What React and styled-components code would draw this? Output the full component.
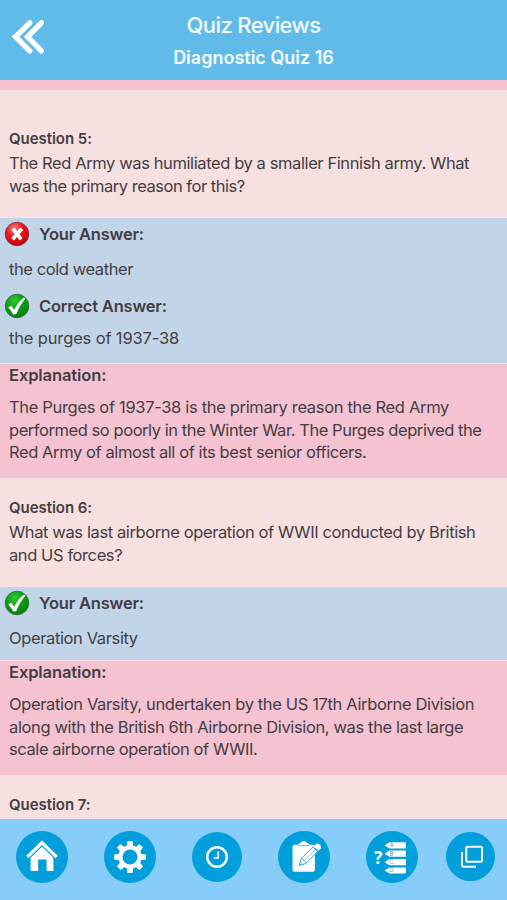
import React from "react";
import styled, { createGlobalStyle } from "styled-components";

const reviews = [
  {
    number: 5,
    first: true,
    question: [
      { text: "The Red Army was humiliated by a smaller Finnish army. What", spacing: -0.4 },
      { text: "was the primary reason for this?", spacing: -0.47 },
    ],
    answers: [
      { label: "Your Answer:", text: "the cold weather", spacing: -0.42, correct: false },
      { label: "Correct Answer:", text: "the purges of 1937-38", spacing: -0.15, correct: true },
    ],
    explanation: [
      { text: "The Purges of 1937-38 is the primary reason the Red Army", spacing: -0.33 },
      { text: "performed so poorly in the Winter War. The Purges deprived the", spacing: -0.44 },
      { text: "Red Army of almost all of its best senior officers.", spacing: -0.41 },
    ],
  },
  {
    number: 6,
    question: [
      { text: "What was last airborne operation of WWII conducted by British", spacing: -0.39 },
      { text: "and US forces?", spacing: -0.41 },
    ],
    answers: [
      { label: "Your Answer:", text: "Operation Varsity", spacing: -0.38, correct: true },
    ],
    explanation: [
      { text: "Operation Varsity, undertaken by the US 17th Airborne Division", spacing: -0.36 },
      { text: "along with the British 6th Airborne Division, was the last large", spacing: -0.37 },
      { text: "scale airborne operation of WWII.", spacing: -0.41 },
    ],
  },
  { number: 7 },
];

const Lines = ({ lines }) => (
  <Text>
    {lines.map(({ text, spacing }) => (
      <Line key={text} $spacing={spacing}>
        {text}
      </Line>
    ))}
  </Text>
);

const StatusIcon = ({ correct }) => {
  const id = correct ? "ball-green" : "ball-red";
  return (
    <svg width="26" height="26" viewBox="0 0 26 26">
      <defs>
        <radialGradient id={id} cx="0.4" cy="0.28" r="0.75">
          <stop offset="0" stopColor={correct ? "#35c63a" : "#ff7d7d"} />
          <stop offset="0.5" stopColor={correct ? "#0aa012" : "#f0131b"} />
          <stop offset="1" stopColor={correct ? "#077a0c" : "#b9000a"} />
        </radialGradient>
      </defs>
      <circle
        cx="13"
        cy="13"
        r="11.8"
        fill={`url(#${id})`}
        stroke={correct ? "#2c6b38" : "#8d2936"}
        strokeWidth="0.8"
      />
      {correct ? (
        <path
          d="M4.2 14.6 7.2 12.8 10.2 16.8C12.6 11.6 15.8 7.6 20 4.4L21.4 5.8C17.4 10.6 14.4 15.4 12.2 21.2L9.2 21.6C7.8 19 6.2 16.6 4.2 14.6Z"
          fill="#fff"
        />
      ) : (
        <path
          d="M8.8 7.6 17.2 18.4M17.8 7.8 8.6 18.2"
          stroke="#fff"
          strokeWidth="3.7"
        />
      )}
    </svg>
  );
};

const BackIcon = () => (
  <svg width="36" height="36" viewBox="0 0 36 36" fill="none">
    <path
      d="M19.8 4.8 5.6 18.8 19.8 32.8M31.3 4.8 17.6 18.8 31.3 32.8"
      stroke="#fff"
      strokeWidth="5.4"
      strokeLinecap="round"
      strokeLinejoin="miter"
    />
  </svg>
);

const HomeIcon = () => (
  <svg width="52" height="52" viewBox="0 0 52 52">
    <path d="M14.6 26.4 26 15.3 37.4 26.4V40H30.6V28.6H22.2V40H14.6Z" fill="#fff" />
    <path
      d="M10.6 27 26 12.3 41.4 27"
      fill="none"
      stroke="#009fdb"
      strokeWidth="4.6"
    />
    <path
      d="M11.3 26 26 11.8 40.7 26"
      fill="none"
      stroke="#fff"
      strokeWidth="3.2"
    />
  </svg>
);

const GearIcon = () => (
  <svg width="52" height="52" viewBox="0 0 52 52">
    <g fill="#fff">
      {[0, 45, 90, 135, 180, 225, 270, 315].map((angle) => (
        <path
          key={angle}
          d="M22.8 16 23.4 10.1H28.6L29.2 16Z"
          transform={`rotate(${angle} 26 26)`}
        />
      ))}
    </g>
    <circle cx="26" cy="26" r="9.6" fill="none" stroke="#fff" strokeWidth="4.2" />
  </svg>
);

const ClockIcon = () => (
  <svg width="52" height="52" viewBox="0 0 52 52" fill="none" stroke="#fff">
    <circle cx="26" cy="26" r="9.8" strokeWidth="2.5" />
    <path d="M27.2 20.4V27H22.6" strokeWidth="1.7" />
  </svg>
);

const ClipboardIcon = () => (
  <svg width="52" height="52" viewBox="0 0 52 52">
    <path
      d="M16.4 13.8H20.3Q20.5 12 22.8 11.8 23.5 9.9 25.8 9.9 28 9.9 28.7 11.8 30.9 12 31.2 13.8H35Q36.9 13.8 36.9 15.7V38.8Q36.9 40.8 35 40.8H16.4Q14.5 40.8 14.5 38.8V15.7Q14.5 13.8 16.4 13.8Z"
      fill="#fff"
    />
    <path d="M20.2 14.7H31.2" stroke="#009fdb" strokeWidth="0.7" />
    <path
      d="M21.4 34.4 23.1 27.7 34.9 16 39.6 20.7 27.9 32.5Z"
      fill="#fff"
      stroke="#2aa5d2"
      strokeWidth="1"
    />
    <path
      d="M25.5 30.1 37.2 18.4M23.1 27.7 25.5 28.4 25.7 30.1 27.5 30.5 27.9 32.5M21.4 34.4 24 31.8"
      fill="none"
      stroke="#2aa5d2"
      strokeWidth="0.6"
    />
    <path
      d="M35.8 15.4 38.2 12.8Q39.7 12.1 41.2 13.3L42.6 14.7Q43.6 16 42.8 17.4L40.4 19.8Z"
      fill="#fff"
    />
  </svg>
);

const OptionsIcon = () => (
  <svg width="52" height="52" viewBox="0 0 52 52">
    <text x="8.2" y="32.8" fill="#fff" fontSize="17" fontWeight="700" fontFamily="Open Sans">
      ?
    </text>
    {["A", "B", "C", "D"].map((letter, i) => (
      <g key={letter} transform={`translate(0 ${i * 8.4})`}>
        <path d="M18.6 14.4 23.4 11.2H39.8V17.4H23.4Z" fill="#fff" />
        <text
          x="25.6"
          y="16.3"
          fill="#2aa5d2"
          fontSize="5.5"
          textAnchor="middle"
          fontFamily="Inter"
        >
          {letter}
        </text>
      </g>
    ))}
  </svg>
);

const CopyIcon = () => (
  <svg width="52" height="52" viewBox="0 0 52 52" fill="none" stroke="#fff">
    <rect x="21.3" y="15.8" width="15.7" height="15" rx="1" strokeWidth="2" />
    <path d="M17 21V34.1Q17 35.8 18.7 35.8H31" strokeWidth="2" />
  </svg>
);

const tabs = [
  { name: "Home", Icon: HomeIcon, size: 52 },
  { name: "Settings", Icon: GearIcon, size: 52 },
  { name: "History", Icon: ClockIcon, size: 50 },
  { name: "Review", Icon: ClipboardIcon, size: 52 },
  { name: "Quiz", Icon: OptionsIcon, size: 52 },
  { name: "Cards", Icon: CopyIcon, size: 49 },
];

const App = () => {
  return (
    <>
      <GlobalStyle />
      <Screen>
        <Header>
          <BackButton aria-label="back">
            <BackIcon />
          </BackButton>
          <h1>Quiz Reviews</h1>
          <h2>Diagnostic Quiz 16</h2>
        </Header>
        <Content>
          <Strip />
          {reviews.map(({ number, first, question, answers, explanation }) => (
            <article key={number}>
              <Question $first={first}>
                <Label $small>Question {number}:</Label>
                {question && <Lines lines={question} />}
              </Question>
              {answers && (
                <Answers $count={answers.length}>
                  {answers.map(({ label, text, spacing, correct }) => (
                    <Answer key={label}>
                      <AnswerTitle>
                        <StatusIcon correct={correct} />
                        <Label>{label}</Label>
                      </AnswerTitle>
                      <Line $spacing={spacing}>{text}</Line>
                    </Answer>
                  ))}
                </Answers>
              )}
              {explanation && (
                <Explanation>
                  <Label>Explanation:</Label>
                  <Lines lines={explanation} />
                </Explanation>
              )}
            </article>
          ))}
        </Content>
        <TabBar>
          {tabs.map(({ name, Icon, size }) => (
            <TabButton key={name} aria-label={name} $size={size}>
              <Icon />
            </TabButton>
          ))}
        </TabBar>
      </Screen>
    </>
  );
};

const GlobalStyle = createGlobalStyle`
  * {
    box-sizing: border-box;
    margin: 0;
    padding: 0;
  }
  body {
    font-family: Inter, "Liberation Sans", sans-serif;
    color: #443e43;
  }
  svg {
    display: block;
    flex-shrink: 0;
  }
`;

const Screen = styled.div`
  width: 507px;
  height: 900px;
  display: flex;
  flex-direction: column;
  overflow: hidden;
`;

const Header = styled.header`
  position: relative;
  height: 80px;
  flex-shrink: 0;
  padding: 8px 0 0;
  background: #60bbe9;
  color: #f4fcff;
  text-align: center;

  h1 {
    font-size: 22px;
    line-height: 34px;
    font-weight: 500;
    letter-spacing: -0.6px;
  }
  h2 {
    font-size: 18px;
    line-height: 32px;
    font-weight: 600;
    letter-spacing: 0;
  }
`;

const BackButton = styled.button`
  position: absolute;
  left: 10px;
  top: 18px;
  border: none;
  background: none;
  cursor: pointer;
`;

const Content = styled.main`
  flex: 1;
  min-height: 0;
  overflow: hidden;
  background: #f6e0e0;
`;

const Strip = styled.div`
  height: 10px;
  background: #f4c2d0;
`;

const Label = styled.h3`
  font-size: ${({ $small }) => ($small ? "15px" : "16.5px")};
  line-height: 24px;
  font-weight: 600;
  letter-spacing: ${({ $small }) => ($small ? "-0.05px" : "-0.2px")};
`;

const Text = styled.div`
  font-size: 16.5px;
  line-height: 22.6px;
`;

const Line = styled.p`
  letter-spacing: ${({ $spacing }) => $spacing}px;
  white-space: nowrap;
`;

const Question = styled.section`
  height: ${({ $first }) => ($first ? "128px" : "109px")};
  padding: ${({ $first }) => ($first ? "37px" : "18px")} 9px 0;

  ${Text} {
    margin-top: 1px;
  }
`;

const Answers = styled.section`
  height: ${({ $count }) => ($count > 1 ? "145px" : "73px")};
  padding-top: 3px;
  background: #c2d4e8;
`;

const Answer = styled.div`
  height: 72px;

  ${Line} {
    padding: 9px 9px 0;
    font-size: 16.5px;
    line-height: 26px;
  }
  & + & ${Line} {
    padding-top: 6px;
  }
`;

const AnswerTitle = styled.div`
  display: flex;
  align-items: center;
  gap: 9px;
  height: 26px;
  padding-left: 4px;
`;

const Explanation = styled.section`
  height: 115px;
  padding: 0 9px;
  background: #f4c2d0;
  border-top: 1px solid #f6dce2;

  ${Label} {
    line-height: 22px;
    letter-spacing: -0.1px;
  }
  ${Text} {
    margin-top: 10px;
  }
`;

const TabBar = styled.nav`
  height: 81px;
  flex-shrink: 0;
  display: flex;
  align-items: center;
  gap: 36px;
  padding: 0 0 6px 16px;
  background: #87cdfa;
`;

const TabButton = styled.button`
  flex-shrink: 0;
  width: ${({ $size }) => $size}px;
  height: ${({ $size }) => $size}px;
  display: flex;
  align-items: center;
  justify-content: center;
  border: none;
  border-radius: 50%;
  background: #009fdb;
  cursor: pointer;

  &:last-child {
    margin-left: -8px;
  }
`;

export default App;
